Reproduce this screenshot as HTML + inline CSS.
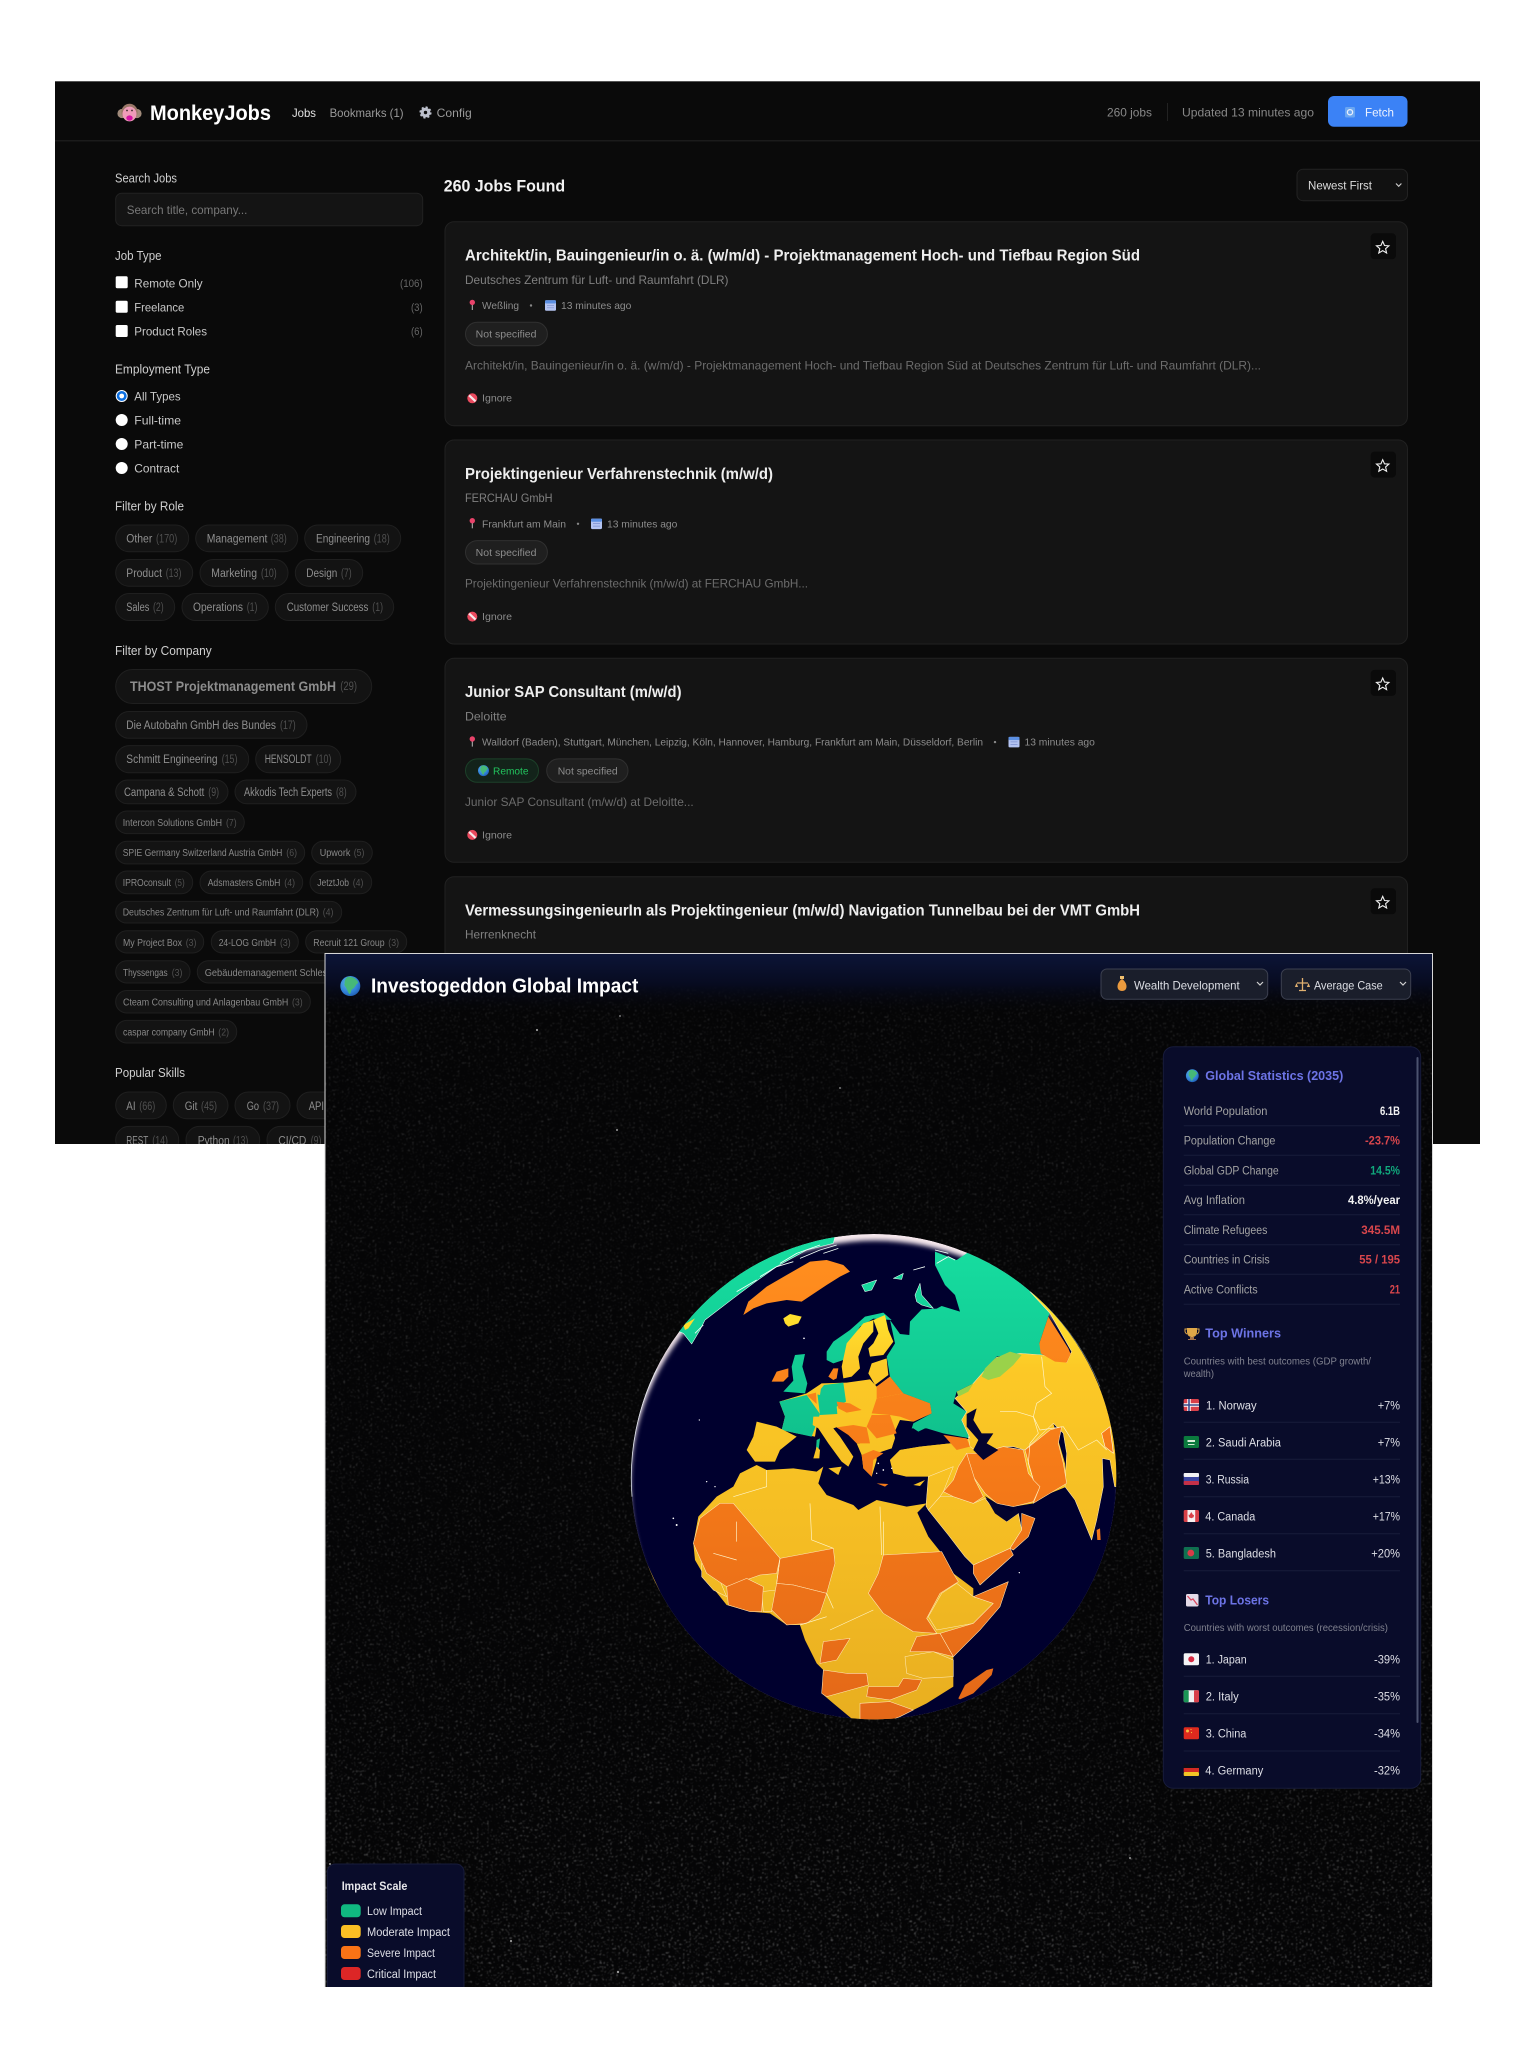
<!DOCTYPE html>
<html lang="en"><head><meta charset="utf-8"><title>MonkeyJobs</title>
<style>
html,body{margin:0;padding:0;background:#fff;width:1536px;height:2048px;overflow:hidden}
svg{display:block;filter:blur(.35px)}
text{font-family:"Liberation Sans",sans-serif}
.l{font-size:12.5px;fill:#cfcfcf}
.s{font-size:12px;fill:#c8c8c8}
.n{font-size:11px;fill:#666}
.p{font-size:11.5px;fill:#8f8f8f}
.q{font-size:10px;fill:#888}
.c{fill:#505050}
.t{font-size:15.5px;font-weight:bold;fill:#eee}
.o{font-size:12px;fill:#808080}
.m{font-size:10.5px;fill:#8c8c8c}
.d{font-size:12px;fill:#6c6c6c}
.g{font-size:11.5px;fill:#a3a3a3}
.v{font-size:11.5px;font-weight:bold;text-anchor:start}
.h{font-size:13px;font-weight:bold;fill:#6d74e6}
.k{font-size:11.5px;fill:#dedfe6}
.u{font-size:10px;fill:#80828f}
</style></head><body>
<svg xmlns="http://www.w3.org/2000/svg" width="1536" height="2048" viewBox="0 0 1536 2048">
<defs>
<clipPath id="win"><rect x="55" y="81" width="1425" height="1063"/></clipPath>
<clipPath id="gw"><rect x="325" y="953" width="1108" height="1034"/></clipPath>
<clipPath id="sph"><circle cx="761" cy="770" r="728"/></clipPath>
<linearGradient id="hg" x1="0" y1="0" x2="0" y2="1"><stop offset="0" stop-color="#0c1538"/><stop offset=".5" stop-color="#070b20"/><stop offset="1" stop-color="#050507" stop-opacity="0"/></linearGradient>
<linearGradient id="Y" gradientUnits="userSpaceOnUse" x1="0" y1="300" x2="0" y2="1500"><stop offset="0" stop-color="#ffdf2d"/><stop offset=".12" stop-color="#fcc926"/><stop offset=".6" stop-color="#f3bb23"/><stop offset="1" stop-color="#e8ae20"/></linearGradient>
<linearGradient id="O" gradientUnits="userSpaceOnUse" x1="0" y1="150" x2="0" y2="1500"><stop offset="0" stop-color="#ff8d1e"/><stop offset=".45" stop-color="#f57a18"/><stop offset="1" stop-color="#e36818"/></linearGradient>
<linearGradient id="G" gradientUnits="userSpaceOnUse" x1="0" y1="100" x2="0" y2="680"><stop offset="0" stop-color="#16dc9f"/><stop offset="1" stop-color="#10c08c"/></linearGradient>
<radialGradient id="gl" cx=".4" cy=".35" r=".75"><stop offset="0" stop-color="#5fb6e8"/><stop offset=".65" stop-color="#2f7fd6"/><stop offset="1" stop-color="#1c55a8"/></radialGradient>
<filter id="stars" x="0" y="0" width="100%" height="100%" color-interpolation-filters="sRGB"><feTurbulence type="fractalNoise" baseFrequency=".48" numOctaves="2" seed="11"/><feColorMatrix values="0 0 0 0 1 0 0 0 0 1 0 0 0 0 1 3.2 3.2 0 0 -3.6"/><feGaussianBlur stdDeviation=".55"/></filter>
<linearGradient id="fade" x1="0" y1="0" x2="0" y2="1"><stop offset="0" stop-color="#fff" stop-opacity="0"/><stop offset=".6" stop-color="#fff" stop-opacity=".25"/><stop offset="1" stop-color="#fff"/></linearGradient>
<mask id="bm"><rect x="325" y="953" width="1108" height="1034" fill="url(#fade)"/></mask>
<filter id="bl"><feGaussianBlur stdDeviation="7"/></filter>
<g id="star"><path d="M0,-6.2L1.8,-2.1L6.2,-1.8L2.9,1.1L3.9,5.4L0,3.1L-3.9,5.4L-2.9,1.1L-6.2,-1.8L-1.8,-2.1Z" fill="none" stroke="#f2f2f2" stroke-width="1.1"/></g>
<g id="pin"><path d="M0,-1V5" stroke="#b9b9b9" stroke-width="1"/><circle cy="-2.6" r="2.7" fill="#e8436a"/></g>
<g id="cal"><rect x="-5.5" y="-5" width="11" height="10.5" rx="1.2" fill="#b4c4f2"/><rect x="-5.5" y="-5" width="11" height="3.2" rx="1" fill="#5b8fe2"/><path d="M-3.5,0H3.5M-3.5,2.5H3.5" stroke="#7c8fd0" stroke-width=".7"/></g>
<g id="ign"><circle r="5" fill="#ea4a5e"/><path d="M-3.2,-3L3.2,3" stroke="#f5e8ea" stroke-width="2.2"/></g>
<g id="earth"><circle r="10" fill="url(#gl)"/><path d="M-3,-9C1,-10 7,-7 8,-3C5,-2 5,2 2,3C0,5 1,8-1,8C-3,5-4,1-6,-1C-5,-3-7,-5-3,-9Z" fill="#46b978"/></g>
</defs>

<rect width="1536" height="2048" fill="#fff"/>
<g clip-path="url(#win)">
<rect x="55" y="81" width="1425" height="1063" fill="#0a0a0a"/>
<rect x="55" y="81" width="1425" height="1" fill="#555"/>
<rect x="55" y="140" width="1425" height="1.5" fill="#1b1b1b"/>

<!-- logo -->
<ellipse cx="122" cy="113.5" rx="4.6" ry="4.6" fill="#a08a7a"/><ellipse cx="137" cy="113.5" rx="4.6" ry="4.6" fill="#a08a7a"/>
<circle cx="129.5" cy="112" r="8.2" fill="#9a7868"/><ellipse cx="129.5" cy="114" rx="7" ry="7.4" fill="#ee9cba"/>
<ellipse cx="129.5" cy="118" rx="3.2" ry="2.6" fill="#d414a4"/><circle cx="127" cy="110.5" r=".9" fill="#3a2a2a"/><circle cx="132" cy="110.5" r=".9" fill="#3a2a2a"/>
<text x="150" y="120" font-size="21" font-weight="bold" fill="#fff" textLength="121" lengthAdjust="spacingAndGlyphs">MonkeyJobs</text>
<text x="292" y="117" font-size="12" fill="#e2e2e2" textLength="24" lengthAdjust="spacingAndGlyphs">Jobs</text>
<text x="329.6" y="117" font-size="12" fill="#9a9a9a" textLength="74" lengthAdjust="spacingAndGlyphs">Bookmarks (1)</text>
<g transform="translate(425.5,112.5)"><circle r="3.3" fill="none" stroke="#bcc0cc" stroke-width="3.2"/><circle r="5.2" fill="none" stroke="#bcc0cc" stroke-width="1.8" stroke-dasharray="2.1 1.98"/></g>
<text x="436.7" y="117" font-size="12" fill="#9a9a9a" textLength="35" lengthAdjust="spacingAndGlyphs">Config</text>
<text x="1107" y="116.7" font-size="12" fill="#888" textLength="45" lengthAdjust="spacingAndGlyphs">260 jobs</text>
<rect x="1167" y="103" width="1" height="18" fill="#222"/>
<text x="1182" y="116.7" font-size="12" fill="#888" textLength="132" lengthAdjust="spacingAndGlyphs">Updated 13 minutes ago</text>
<rect x="1328" y="96" width="79.5" height="30.7" rx="6" fill="#3b82f6"/>
<rect x="1345" y="107" width="10" height="10.5" rx="1.5" fill="#6aa6f2"/><circle cx="1350" cy="112.2" r="2.6" fill="none" stroke="#e8eefc" stroke-width="1.3"/>
<text x="1365" y="116.7" font-size="12" fill="#eef3ff" textLength="29" lengthAdjust="spacingAndGlyphs">Fetch</text>

<!-- sidebar -->
<text class="l" x="115" y="182.7" textLength="62" lengthAdjust="spacingAndGlyphs">Search Jobs</text>
<rect x="115.7" y="193.3" width="307" height="32.4" rx="6" fill="#141414" stroke="#222"/>
<text x="126.7" y="214" font-size="12" fill="#787878" textLength="120.7" lengthAdjust="spacingAndGlyphs">Search title, company...</text>

<text class="l" x="115" y="260" textLength="46.5" lengthAdjust="spacingAndGlyphs">Job Type</text>
<rect x="115.7" y="276.3" width="12" height="12" rx="1.5" fill="#fff"/>
<text class="s" x="134.3" y="287.3" textLength="68.3" lengthAdjust="spacingAndGlyphs">Remote Only</text>
<text class="n" x="400" y="287" textLength="22.7" lengthAdjust="spacingAndGlyphs">(106)</text>
<rect x="115.7" y="300.7" width="12" height="12" rx="1.5" fill="#fff"/>
<text class="s" x="134.3" y="311.7" textLength="50" lengthAdjust="spacingAndGlyphs">Freelance</text>
<text class="n" x="411" y="311" textLength="11.7" lengthAdjust="spacingAndGlyphs">(3)</text>
<rect x="115.7" y="325" width="12" height="12" rx="1.5" fill="#fff"/>
<text class="s" x="134.3" y="335.7" textLength="72.7" lengthAdjust="spacingAndGlyphs">Product Roles</text>
<text class="n" x="411" y="335" textLength="11.7" lengthAdjust="spacingAndGlyphs">(6)</text>

<text class="l" x="115" y="373.3" textLength="95" lengthAdjust="spacingAndGlyphs">Employment Type</text>
<circle cx="121.7" cy="396" r="6" fill="#fff"/><circle cx="121.7" cy="396" r="5" fill="#0b6ee0"/><circle cx="121.7" cy="396" r="2.4" fill="#fff"/>
<text class="s" x="134.3" y="400.7" textLength="46.3" lengthAdjust="spacingAndGlyphs">All Types</text>
<circle cx="121.7" cy="420" r="6" fill="#fff"/>
<text class="s" x="134.3" y="424.7" textLength="46.7" lengthAdjust="spacingAndGlyphs">Full-time</text>
<circle cx="121.7" cy="444" r="6" fill="#fff"/>
<text class="s" x="134.3" y="448.7" textLength="49" lengthAdjust="spacingAndGlyphs">Part-time</text>
<circle cx="121.7" cy="468" r="6" fill="#fff"/>
<text class="s" x="134.3" y="472.7" textLength="45" lengthAdjust="spacingAndGlyphs">Contract</text>

<text class="l" x="115" y="510.7" textLength="69" lengthAdjust="spacingAndGlyphs">Filter by Role</text>
<g fill="#131313" stroke="#1f1f1f">
<rect x="115.7" y="525" width="73" height="26.7" rx="13.3"/><rect x="195.7" y="525" width="102" height="26.7" rx="13.3"/><rect x="304.7" y="525" width="96" height="26.7" rx="13.3"/>
<rect x="115.7" y="559.5" width="77" height="26.7" rx="13.3"/><rect x="200" y="559.5" width="88" height="26.7" rx="13.3"/><rect x="295.3" y="559.5" width="67.4" height="26.7" rx="13.3"/>
<rect x="115.7" y="593.5" width="59" height="27" rx="13.5"/><rect x="182" y="593.5" width="86.3" height="27" rx="13.5"/><rect x="275.3" y="593.5" width="118.4" height="27" rx="13.5"/>
<rect x="115.7" y="669.5" width="256" height="34" rx="17"/>
<rect x="115.7" y="711.5" width="191.3" height="26.8" rx="13.4"/>
<rect x="115.7" y="745.6" width="133" height="27.2" rx="13.6"/><rect x="255.7" y="745.6" width="85" height="27.2" rx="13.6"/>
<rect x="115.7" y="780" width="112.3" height="23.8" rx="11.9"/><rect x="235" y="780" width="121" height="23.8" rx="11.9"/>
<rect x="115.7" y="811" width="128.6" height="22.6" rx="11.3"/>
<rect x="115.7" y="841.3" width="189" height="22.6" rx="11.3"/><rect x="311.7" y="841.3" width="60.6" height="22.6" rx="11.3"/>
<rect x="115.7" y="871" width="77" height="22.7" rx="11.3"/><rect x="200" y="871" width="102.7" height="22.7" rx="11.3"/><rect x="310" y="871" width="61.7" height="22.7" rx="11.3"/>
<rect x="115.7" y="901.4" width="226" height="21.6" rx="10.8"/>
<rect x="115.7" y="930.8" width="88" height="22.2" rx="11"/><rect x="211.3" y="930.8" width="87" height="22.2" rx="11"/><rect x="305.7" y="930.8" width="101" height="22.2" rx="11"/>
<rect x="115.7" y="960.7" width="74.3" height="22.3" rx="11"/><rect x="197.3" y="960.7" width="205" height="22.3" rx="11"/>
<rect x="115.7" y="990.5" width="194.6" height="22.5" rx="11"/>
<rect x="115.7" y="1020.4" width="121" height="22.6" rx="11"/>
<rect x="115.7" y="1092" width="50.6" height="26.7" rx="13.3"/><rect x="173.3" y="1092" width="54.7" height="26.7" rx="13.3"/><rect x="235" y="1092" width="55" height="26.7" rx="13.3"/><rect x="297" y="1092" width="70" height="26.7" rx="13.3"/>
<rect x="115.7" y="1126.4" width="63" height="27" rx="13.3"/><rect x="186" y="1126.4" width="73.7" height="27" rx="13.3"/><rect x="267" y="1126.4" width="70" height="27" rx="13.3"/>
</g>
<text class="p" x="126.3" y="542.5" textLength="26" lengthAdjust="spacingAndGlyphs">Other</text><text class="p c" x="156" y="542.5" textLength="21.3" lengthAdjust="spacingAndGlyphs">(170)</text>
<text class="p" x="206.7" y="542.5" textLength="60.7" lengthAdjust="spacingAndGlyphs">Management</text><text class="p c" x="270.7" y="542.5" textLength="16" lengthAdjust="spacingAndGlyphs">(38)</text>
<text class="p" x="316" y="542.5" textLength="54" lengthAdjust="spacingAndGlyphs">Engineering</text><text class="p c" x="373.7" y="542.5" textLength="16" lengthAdjust="spacingAndGlyphs">(18)</text>
<text class="p" x="126.3" y="577" textLength="35.7" lengthAdjust="spacingAndGlyphs">Product</text><text class="p c" x="165.7" y="577" textLength="15.7" lengthAdjust="spacingAndGlyphs">(13)</text>
<text class="p" x="211.3" y="577" textLength="45.7" lengthAdjust="spacingAndGlyphs">Marketing</text><text class="p c" x="261" y="577" textLength="15.7" lengthAdjust="spacingAndGlyphs">(10)</text>
<text class="p" x="306.3" y="577" textLength="31" lengthAdjust="spacingAndGlyphs">Design</text><text class="p c" x="341" y="577" textLength="10.7" lengthAdjust="spacingAndGlyphs">(7)</text>
<text class="p" x="126.3" y="611" textLength="23" lengthAdjust="spacingAndGlyphs">Sales</text><text class="p c" x="153" y="611" textLength="10.7" lengthAdjust="spacingAndGlyphs">(2)</text>
<text class="p" x="193" y="611" textLength="50" lengthAdjust="spacingAndGlyphs">Operations</text><text class="p c" x="246.7" y="611" textLength="10.7" lengthAdjust="spacingAndGlyphs">(1)</text>
<text class="p" x="286.7" y="611" textLength="81.7" lengthAdjust="spacingAndGlyphs">Customer Success</text><text class="p c" x="372.3" y="611" textLength="10.7" lengthAdjust="spacingAndGlyphs">(1)</text>

<text class="l" x="115" y="655" textLength="96.7" lengthAdjust="spacingAndGlyphs">Filter by Company</text>
<text x="130" y="691" font-size="14" font-weight="bold" fill="#8d8d8d" textLength="206" lengthAdjust="spacingAndGlyphs">THOST Projektmanagement GmbH</text><text class="p c" x="340.3" y="690" textLength="16.7" lengthAdjust="spacingAndGlyphs">(29)</text>
<text class="p" x="126.3" y="729" textLength="149.7" lengthAdjust="spacingAndGlyphs">Die Autobahn GmbH des Bundes</text><text class="p c" x="280" y="729" textLength="15.7" lengthAdjust="spacingAndGlyphs">(17)</text>
<text class="p" x="126.3" y="763" textLength="91.3" lengthAdjust="spacingAndGlyphs">Schmitt Engineering</text><text class="p c" x="221.7" y="763" textLength="15.7" lengthAdjust="spacingAndGlyphs">(15)</text>
<text class="p" x="264.7" y="763" textLength="47" lengthAdjust="spacingAndGlyphs">HENSOLDT</text><text class="p c" x="315.7" y="763" textLength="15.7" lengthAdjust="spacingAndGlyphs">(10)</text>
<text class="p" x="124" y="796" textLength="80.3" lengthAdjust="spacingAndGlyphs">Campana &amp; Schott</text><text class="p c" x="208.3" y="796" textLength="10.7" lengthAdjust="spacingAndGlyphs">(9)</text>
<text class="p" x="244" y="796" textLength="88" lengthAdjust="spacingAndGlyphs">Akkodis Tech Experts</text><text class="p c" x="336" y="796" textLength="10.7" lengthAdjust="spacingAndGlyphs">(8)</text>
<text class="q" x="122.7" y="826" textLength="99.3" lengthAdjust="spacingAndGlyphs">Intercon Solutions GmbH</text><text class="q c" x="226" y="826" textLength="10.7" lengthAdjust="spacingAndGlyphs">(7)</text>
<text class="q" x="122.7" y="856" textLength="159.7" lengthAdjust="spacingAndGlyphs">SPIE Germany Switzerland Austria GmbH</text><text class="q c" x="286.3" y="856" textLength="10.7" lengthAdjust="spacingAndGlyphs">(6)</text>
<text class="q" x="319.7" y="856" textLength="30.7" lengthAdjust="spacingAndGlyphs">Upwork</text><text class="q c" x="353.7" y="856" textLength="10.7" lengthAdjust="spacingAndGlyphs">(5)</text>
<text class="q" x="122.7" y="886" textLength="48.3" lengthAdjust="spacingAndGlyphs">IPROconsult</text><text class="q c" x="174.7" y="886" textLength="10" lengthAdjust="spacingAndGlyphs">(5)</text>
<text class="q" x="207.7" y="886" textLength="72.7" lengthAdjust="spacingAndGlyphs">Adsmasters GmbH</text><text class="q c" x="284.3" y="886" textLength="10.7" lengthAdjust="spacingAndGlyphs">(4)</text>
<text class="q" x="317.3" y="886" textLength="31.7" lengthAdjust="spacingAndGlyphs">JetztJob</text><text class="q c" x="352.7" y="886" textLength="10.7" lengthAdjust="spacingAndGlyphs">(4)</text>
<text class="q" x="122.7" y="915.5" textLength="196.3" lengthAdjust="spacingAndGlyphs">Deutsches Zentrum für Luft- und Raumfahrt (DLR)</text><text class="q c" x="322.7" y="915.5" textLength="10.7" lengthAdjust="spacingAndGlyphs">(4)</text>
<text class="q" x="123" y="946" textLength="59" lengthAdjust="spacingAndGlyphs">My Project Box</text><text class="q c" x="185.7" y="946" textLength="10.7" lengthAdjust="spacingAndGlyphs">(3)</text>
<text class="q" x="218.7" y="946" textLength="57.3" lengthAdjust="spacingAndGlyphs">24-LOG GmbH</text><text class="q c" x="280" y="946" textLength="10.7" lengthAdjust="spacingAndGlyphs">(3)</text>
<text class="q" x="313.3" y="946" textLength="71.3" lengthAdjust="spacingAndGlyphs">Recruit 121 Group</text><text class="q c" x="388.3" y="946" textLength="10.7" lengthAdjust="spacingAndGlyphs">(3)</text>
<text class="q" x="123" y="976" textLength="44.7" lengthAdjust="spacingAndGlyphs">Thyssengas</text><text class="q c" x="171.7" y="976" textLength="10.7" lengthAdjust="spacingAndGlyphs">(3)</text>
<text class="q" x="204.7" y="976" textLength="187" lengthAdjust="spacingAndGlyphs">Gebäudemanagement Schleswig-Holstein (3)</text>
<text class="q" x="123" y="1005.5" textLength="165.3" lengthAdjust="spacingAndGlyphs">Cteam Consulting und Anlagenbau GmbH</text><text class="q c" x="292" y="1005.5" textLength="10.7" lengthAdjust="spacingAndGlyphs">(3)</text>
<text class="q" x="123" y="1035.5" textLength="91.7" lengthAdjust="spacingAndGlyphs">caspar company GmbH</text><text class="q c" x="218.3" y="1035.5" textLength="10.7" lengthAdjust="spacingAndGlyphs">(2)</text>

<text class="l" x="115" y="1077" textLength="70" lengthAdjust="spacingAndGlyphs">Popular Skills</text>
<text class="p" x="126.3" y="1110" textLength="9.3" lengthAdjust="spacingAndGlyphs">AI</text><text class="p c" x="139.3" y="1110" textLength="16" lengthAdjust="spacingAndGlyphs">(66)</text>
<text class="p" x="184.7" y="1110" textLength="12.7" lengthAdjust="spacingAndGlyphs">Git</text><text class="p c" x="201" y="1110" textLength="16" lengthAdjust="spacingAndGlyphs">(45)</text>
<text class="p" x="246.7" y="1110" textLength="12.3" lengthAdjust="spacingAndGlyphs">Go</text><text class="p c" x="263" y="1110" textLength="16" lengthAdjust="spacingAndGlyphs">(37)</text>
<text class="p" x="308.7" y="1110" textLength="15.3" lengthAdjust="spacingAndGlyphs">API</text>
<text class="p" x="126.3" y="1144.5" textLength="22" lengthAdjust="spacingAndGlyphs">REST</text><text class="p c" x="152.3" y="1144.5" textLength="15.7" lengthAdjust="spacingAndGlyphs">(14)</text>
<text class="p" x="197.7" y="1144.5" textLength="32" lengthAdjust="spacingAndGlyphs">Python</text><text class="p c" x="233" y="1144.5" textLength="15.3" lengthAdjust="spacingAndGlyphs">(13)</text>
<text class="p" x="278.3" y="1144.5" textLength="28" lengthAdjust="spacingAndGlyphs">CI/CD</text><text class="p c" x="310.7" y="1144.5" textLength="10.7" lengthAdjust="spacingAndGlyphs">(9)</text>

<!-- main -->
<text x="443.7" y="191.7" font-size="17" font-weight="bold" fill="#f2f2f2" textLength="121.5" lengthAdjust="spacingAndGlyphs">260 Jobs Found</text>
<rect x="1297" y="169.3" width="110.5" height="31.4" rx="6" fill="#111" stroke="#222"/>
<text x="1308" y="189.3" font-size="12" fill="#dcdcdc" textLength="64" lengthAdjust="spacingAndGlyphs">Newest First</text>
<path d="M1396,183.5l2.7,2.8 2.7,-2.8" fill="none" stroke="#c8c8c8" stroke-width="1.2"/>

<!-- Card 1 -->
<rect x="445" y="221.7" width="962.5" height="204" rx="9" fill="#141414" stroke="#212121"/>
<rect x="1370.6" y="233.3" width="25.4" height="26" rx="4" fill="#0a0a0a"/><use href="#star" x="1382.7" y="247.6"/>
<text class="t" x="465" y="260.7" textLength="675" lengthAdjust="spacingAndGlyphs">Architekt/in, Bauingenieur/in o. ä. (w/m/d) - Projektmanagement Hoch- und Tiefbau Region Süd</text>
<text class="o" x="465" y="284.2" textLength="263.5" lengthAdjust="spacingAndGlyphs">Deutsches Zentrum für Luft- und Raumfahrt (DLR)</text>
<use href="#pin" x="472.3" y="305"/>
<text class="m" x="482" y="309" textLength="37" lengthAdjust="spacingAndGlyphs">Weßling</text>
<circle cx="531" cy="305.5" r="1.2" fill="#888"/><use href="#cal" x="550.5" y="305.3"/>
<text class="m" x="561" y="309" textLength="70.4" lengthAdjust="spacingAndGlyphs">13 minutes ago</text>
<rect x="465.5" y="322.3" width="81.9" height="23.4" rx="11.7" fill="#1f1f1f" stroke="#303030"/>
<text class="m" x="475.7" y="337.7" textLength="60.8" lengthAdjust="spacingAndGlyphs">Not specified</text>
<text class="d" x="465" y="369.3" textLength="796" lengthAdjust="spacingAndGlyphs">Architekt/in, Bauingenieur/in o. ä. (w/m/d) - Projektmanagement Hoch- und Tiefbau Region Süd at Deutsches Zentrum für Luft- und Raumfahrt (DLR)...</text>
<use href="#ign" x="472.3" y="398.3"/><text class="m" x="482" y="401.7" fill="#777" textLength="30" lengthAdjust="spacingAndGlyphs">Ignore</text>

<!-- Card 2 -->
<rect x="445" y="440" width="962.5" height="204" rx="9" fill="#141414" stroke="#212121"/>
<rect x="1370.6" y="451.6" width="25.4" height="26" rx="4" fill="#0a0a0a"/><use href="#star" x="1382.7" y="465.9"/>
<text class="t" x="465" y="479" textLength="308" lengthAdjust="spacingAndGlyphs">Projektingenieur Verfahrenstechnik (m/w/d)</text>
<text class="o" x="465" y="502" textLength="87.5" lengthAdjust="spacingAndGlyphs">FERCHAU GmbH</text>
<use href="#pin" x="472.3" y="523.3"/>
<text class="m" x="482" y="527.3" textLength="84" lengthAdjust="spacingAndGlyphs">Frankfurt am Main</text>
<circle cx="578" cy="523.8" r="1.2" fill="#888"/><use href="#cal" x="596.5" y="523.6"/>
<text class="m" x="607" y="527.3" textLength="70.4" lengthAdjust="spacingAndGlyphs">13 minutes ago</text>
<rect x="465.5" y="540.6" width="81.9" height="23.4" rx="11.7" fill="#1f1f1f" stroke="#303030"/>
<text class="m" x="475.7" y="556" textLength="60.8" lengthAdjust="spacingAndGlyphs">Not specified</text>
<text class="d" x="465" y="587.6" textLength="343" lengthAdjust="spacingAndGlyphs">Projektingenieur Verfahrenstechnik (m/w/d) at FERCHAU GmbH...</text>
<use href="#ign" x="472.3" y="616.6"/><text class="m" x="482" y="620" textLength="30" lengthAdjust="spacingAndGlyphs">Ignore</text>

<!-- Card 3 -->
<rect x="445" y="658.3" width="962.5" height="204" rx="9" fill="#141414" stroke="#212121"/>
<rect x="1370.6" y="669.9" width="25.4" height="26" rx="4" fill="#0a0a0a"/><use href="#star" x="1382.7" y="684.2"/>
<text class="t" x="465" y="697" textLength="216.5" lengthAdjust="spacingAndGlyphs">Junior SAP Consultant (m/w/d)</text>
<text class="o" x="465" y="720.3" textLength="41.6" lengthAdjust="spacingAndGlyphs">Deloitte</text>
<use href="#pin" x="472.3" y="741.6"/>
<text class="m" x="482" y="745.6" textLength="501" lengthAdjust="spacingAndGlyphs">Walldorf (Baden), Stuttgart, München, Leipzig, Köln, Hannover, Hamburg, Frankfurt am Main, Düsseldorf, Berlin</text>
<circle cx="995" cy="742.1" r="1.2" fill="#888"/><use href="#cal" x="1014" y="741.9"/>
<text class="m" x="1024.5" y="745.6" textLength="70.4" lengthAdjust="spacingAndGlyphs">13 minutes ago</text>
<rect x="465.5" y="758.9" width="73" height="23.4" rx="11.7" fill="#13231a" stroke="#1c4029"/>
<g transform="translate(483.5,770.6) scale(.55)"><use href="#earth"/></g>
<text x="493" y="774.3" font-size="10.5" fill="#22c55e" textLength="35.5" lengthAdjust="spacingAndGlyphs">Remote</text>
<rect x="546.7" y="758.9" width="81.3" height="23.4" rx="11.7" fill="#1f1f1f" stroke="#303030"/>
<text class="m" x="557.7" y="774.3" textLength="60" lengthAdjust="spacingAndGlyphs">Not specified</text>
<text class="d" x="465" y="805.9" textLength="228.7" lengthAdjust="spacingAndGlyphs">Junior SAP Consultant (m/w/d) at Deloitte...</text>
<use href="#ign" x="472.3" y="834.9"/><text class="m" x="482" y="838.3" textLength="30" lengthAdjust="spacingAndGlyphs">Ignore</text>

<!-- Card 4 -->
<rect x="445" y="876.7" width="962.5" height="204" rx="9" fill="#141414" stroke="#212121"/>
<rect x="1370.6" y="888.3" width="25.4" height="26" rx="4" fill="#0a0a0a"/><use href="#star" x="1382.7" y="902.6"/>
<text class="t" x="465" y="915.7" textLength="675" lengthAdjust="spacingAndGlyphs">VermessungsingenieurIn als Projektingenieur (m/w/d) Navigation Tunnelbau bei der VMT GmbH</text>
<text class="o" x="465" y="938.7" textLength="71" lengthAdjust="spacingAndGlyphs">Herrenknecht</text>
</g>

<!-- Globe window -->
<g clip-path="url(#gw)">
<rect x="325" y="953" width="1108" height="1034" fill="#050506"/>
<rect x="325" y="953" width="1108" height="1034" filter="url(#stars)" opacity=".14"/>
<g mask="url(#bm)"><rect x="325" y="953" width="1108" height="1034" filter="url(#stars)" opacity=".22"/></g>
<rect x="325" y="953" width="1108" height="62" fill="url(#hg)"/>
<g fill="#9a9a9a"><circle cx="537" cy="1030" r="1.1"/><circle cx="620" cy="1016" r=".9"/><circle cx="617" cy="1130" r="1"/><circle cx="840" cy="1088" r=".9"/><circle cx="1130" cy="1858" r="1"/><circle cx="618" cy="1972" r="1.2"/><circle cx="511" cy="1941" r="1.1"/><circle cx="330" cy="1864" r="1"/></g>

<!-- Globe -->
<g transform="translate(620,1220) scale(.33333)">
<g clip-path="url(#sph)">
<circle cx="761" cy="770" r="728" fill="#f6e8ee"/>
<circle cx="765" cy="796" r="734" fill="#04042e" filter="url(#bl)"/>
</g>
<path d="M1230,215A728,728 0 0 1 1440,500" fill="none" stroke="#9fb4c8" stroke-width="2" opacity=".6"/>
<path d="M36,830A728,728 0 0 1 112,445" fill="none" stroke="#e8eef4" stroke-width="2.5" opacity=".85"/>
<g clip-path="url(#sph)" stroke="#ffe9b8" stroke-width="1.6" stroke-linejoin="round">
<!-- land bases -->
<g fill="url(#Y)" stroke="none">
<path d="M478,545L560,520L605,490L680,488L750,478L770,500L810,470L850,520L930,550L935,580L880,605L840,600L822,640L825,655L815,685L770,700L770,720L755,770L730,745L725,705L720,670L690,645L650,622L640,605L590,620L585,650L530,640L485,630L495,590Z"/>
<path d="M810,720L840,690L900,680L990,670L1050,655L1090,725L1135,695L1215,690L1300,610L1335,730L1340,800L1290,820L1240,850L1180,860L1130,850L1095,835L1060,850L1000,830L960,830L925,870L918,858L925,770L860,770L820,760Z"/>
<path d="M235,890L290,830L340,800L360,760L410,735L440,750L520,745L590,755L610,740L595,790L620,825L700,855L715,870L770,840L860,860L920,850L892,878L925,950L965,1000L1000,1060L1060,1105L1060,1130L1165,1085L1140,1160L1080,1230L1000,1310L1000,1400L920,1450L880,1470L840,1490L800,1505L700,1500L640,1450L605,1420L610,1350L590,1330L555,1260L540,1215L500,1215L450,1180L390,1175L320,1155L260,1080L225,1020L220,970Z"/>
</g>
<!-- green -->
<g fill="url(#G)">
<path d="M100,300L190,340L215,372L240,330L255,300L340,235L400,190L470,140L560,90L640,70L650,30L300,30Z" stroke="#e8fff5"/>
<path d="M945,95L1010,120L1100,60L1300,250L1285,290L1258,370L1268,405L1200,400L1130,410L1095,450L1060,490L1010,515L1000,550L1040,575L1025,600L1050,655L970,640L920,625L875,625L880,610L935,580L930,550L850,520L810,470L800,410L825,370L810,300L840,342L868,345L870,305L905,268L950,266L965,258L1020,275L1005,225L975,195L945,135Z" stroke="none"/>
<path d="M620,395L640,365L690,330L735,290L790,278L815,300L760,296L720,320L690,370L670,420L640,430L620,420Z" stroke="none"/>
<path d="M490,515L520,482L515,440L525,405L555,402L547,440L562,490L555,520Z" stroke="none"/>
<path d="M478,545L540,530L560,525L600,582L575,650L530,640L485,630L495,590Z" stroke="none"/>
<path d="M592,520L612,495L670,488L678,545L650,560L652,582L600,585Z" stroke="none"/>
<path d="M725,195L770,180L755,210L735,215Z" stroke="#e8fff5"/>
<path d="M590,660L600,655L596,688L588,688Z" stroke="none"/>
<path d="M885,225L900,190L905,225L940,265L905,255L890,245Z" stroke="#e8fff5"/>
<path d="M820,175L850,160L845,178Z" stroke="#e8fff5"/>
<path d="M880,625L905,610L915,625L895,635Z" stroke="none"/>
</g>
<!-- yellow -->
<g fill="url(#Y)">
<path d="M1005,535L1060,490L1095,450L1130,412L1200,400L1268,405L1340,428L1355,395L1290,280L1230,215L1500,400L1500,800L1484,800L1470,720L1447,715L1450,800L1430,900L1415,960L1390,900L1365,840L1335,800L1340,700L1330,640L1300,610L1215,690L1180,680L1150,680L1080,700L1050,680L1045,650L1050,655L1025,600L1040,575Z"/>
<path d="M490,295L510,282L545,290L535,310L505,320L495,310Z" stroke="none"/>
<path d="M665,440L680,370L730,310L760,300L760,335L730,370L715,410L720,445L695,470L670,475Z" stroke="none"/>
<path d="M760,300L795,285L805,330L820,365L790,405L750,410L745,385L760,370L775,340Z" stroke="none"/>
<path d="M745,460L755,430L800,415L805,465L765,495Z" stroke="none"/>
<path d="M678,495L750,478L765,495L770,550L750,570L690,550L678,530Z" stroke="none"/>
<path d="M640,595L680,575L720,580L700,605L645,610Z" stroke="none"/>
<path d="M685,615L700,590L755,580L745,610L705,620Z" stroke="none"/>
<path d="M755,660L825,650L815,685L770,690Z" stroke="none"/>
<path d="M710,670L755,670L755,695L725,705Z" stroke="none"/>
<path d="M580,590L640,590L655,620L640,625L660,650L700,710L685,740L665,725L625,670L595,625L578,615Z" stroke="none"/>
<path d="M625,745L665,740L655,765Z" stroke="none"/>
<path d="M580,715L590,680L600,690L598,715Z" stroke="none"/>
<path d="M575,520L605,490L600,525Z" stroke="none"/>
<path d="M380,690L400,650L410,605L470,620L530,650L480,690L465,725L405,725Z" stroke="none"/>
<path d="M810,720L840,690L900,680L990,670L1030,710L1000,735L910,745L860,770L820,760Z" stroke="none"/>
<path d="M880,795L915,780L900,798Z" stroke="none"/>
<path d="M925,870L960,830L1000,830L1060,850L1095,835L1130,880L1160,905L1195,880L1205,930L1170,985L1060,1035L1035,1010L985,945Z"/>
<path d="M925,770L1000,740L970,815L960,830L925,870L918,858Z"/>
<path d="M245,1030L290,1060L320,1130L280,1110L245,1070Z"/>
<path d="M425,1115L470,1110L455,1175L430,1175Z"/>
<path d="M965,1120L1010,1090L1060,1130L1120,1150L1060,1210L950,1230L925,1190Z"/>
<path d="M855,1310L940,1295L1000,1320L1000,1370L910,1375L860,1360Z"/>
<path d="M70,1010L85,1040L120,1115L100,1090Z" stroke="none"/>
<path d="M190,315L225,295L205,325L195,330Z" stroke="none"/>
<path d="M1095,445L1125,415L1170,395L1205,405L1180,435L1140,470L1105,480L1085,470Z" fill="#9ad24a" stroke="none"/>
<path d="M1010,515L1060,490L1045,515L1015,530Z" fill="#9ad24a" stroke="none"/>
</g>
<!-- orange -->
<g fill="url(#O)">
<path d="M370,285L385,245L440,200L500,165L570,125L620,120L670,135L690,155L660,170L620,195L590,215L545,245L500,240L440,250L400,265Z" stroke="none"/>
<path d="M1285,290L1345,385L1352,402L1340,428L1305,425L1262,400L1258,370Z" stroke="none"/>
<path d="M455,485L470,455L505,445L505,470L490,485Z" stroke="none"/>
<path d="M625,470L640,445L655,445L650,475L640,480Z" stroke="none"/>
<path d="M560,525L588,518L590,552Z" stroke="none"/>
<path d="M650,545L690,550L725,570L680,578L655,565Z" stroke="none"/>
<path d="M770,500L810,470L850,520L770,535Z" stroke="none"/>
<path d="M770,535L850,520L930,550L935,580L880,605L840,590L810,585L755,580Z" stroke="none"/>
<path d="M740,620L755,585L810,585L830,640L770,655Z" stroke="none"/>
<path d="M650,622L700,615L740,622L750,670L710,670L685,645Z" stroke="none"/>
<path d="M725,705L760,690L790,700L760,720L755,770L730,745Z" stroke="none"/>
<path d="M970,645L1040,655L1050,680L1010,690Z" stroke="none"/>
<path d="M1040,700L1080,700L1150,680L1210,690L1225,760L1260,800L1240,845L1180,860L1130,850L1095,820L1060,770Z"/>
<path d="M1015,740L1040,700L1065,780L1090,830L1060,850L1000,830L970,815L1000,780Z"/>
<path d="M1215,690L1290,630L1325,620L1315,670L1330,730L1340,790L1290,820L1240,850L1260,800L1240,780Z"/>
<path d="M1205,880L1245,895L1225,950L1180,990L1170,985L1205,930Z"/>
<path d="M1060,1035L1170,985L1180,1005L1080,1095L1060,1060Z"/>
<path d="M240,895L300,850L340,850L480,1015L470,1060L420,1065L350,1090L320,1100L260,1060L220,970Z"/>
<path d="M480,1015L640,985L645,1030L620,1120L520,1095L470,1090Z"/>
<path d="M470,1090L520,1095L620,1120L600,1180L560,1210L500,1215L455,1170Z"/>
<path d="M320,1100L380,1075L430,1100L425,1175L390,1175L325,1155Z"/>
<path d="M790,1005L965,995L1000,1060L1015,1085L960,1120L920,1195L950,1240L880,1235L790,1180L745,1120L775,1060Z"/>
<path d="M1060,1130L1165,1085L1140,1160L1080,1230L1000,1310L960,1240L1060,1210L1120,1150Z"/>
<path d="M870,1295L890,1250L960,1240L1000,1310L940,1295Z"/>
<path d="M610,1265L690,1255L650,1320L600,1330Z"/>
<path d="M610,1350L680,1360L740,1360L745,1395L620,1430L605,1420Z"/>
<path d="M745,1400L835,1400L850,1375L905,1380L890,1410L810,1440L740,1430Z"/>
<path d="M720,1450L810,1445L880,1470L840,1490L800,1505L720,1505Z"/>
<path d="M1015,1435L1035,1395L1100,1350L1120,1345L1115,1365L1060,1420L1020,1438Z" stroke="none"/>
<path d="M1430,930L1440,925L1442,960L1432,960Z" stroke="none"/>
<path d="M1445,640L1470,620L1480,700L1455,680Z" stroke="#fff"/>
<path d="M770,790L805,792L795,800Z" stroke="none"/>
</g>
<!-- inland seas -->
<g fill="#04042e" stroke="none">
<path d="M1040,582L1070,565L1060,600L1085,640L1120,640L1100,670L1135,690L1090,720L1060,690L1075,660L1040,620Z"/>
<path d="M1095,828L1130,850L1175,875L1190,860L1195,880L1160,905L1125,880Z"/>
</g>
<!-- white border lines and tattered arctic -->
<g fill="none" stroke="#fff4c8" stroke-width="2">
<path d="M1265,410L1275,500L1295,520L1250,550L1240,590L1255,640L1230,670L1225,730L1240,780"/>
<path d="M1140,575L1190,575L1240,590L1260,630L1330,620L1375,690L1430,660L1460,690"/>
<path d="M350,905V965M790,905V1005M570,850L575,960L640,985M440,750L440,800L340,830M780,860L785,1005"/>
<path d="M280,1000L350,1020M480,1015L470,1090M620,1120L640,1165M540,1215L620,1190M630,1230L760,1170"/>
</g>
<g fill="none" stroke="#f4fffa" stroke-width="2.5">
<path d="M480,130L530,100L600,75M540,115L600,90L650,75M420,170L470,140L520,125M350,215L410,180M610,100L655,85"/>
<path d="M950,130L985,110L1005,120M945,90L985,100M880,150L915,140M225,340L250,315"/>
</g>
</g>
<g fill="#fff"><circle cx="170" cy="915" r="3"/><circle cx="160" cy="895" r="2.5"/><circle cx="238" cy="600" r="2"/><circle cx="552" cy="355" r="2.5"/><circle cx="775" cy="730" r="2.5"/><circle cx="790" cy="750" r="2.5"/><circle cx="770" cy="760" r="2"/><circle cx="815" cy="745" r="2"/><circle cx="285" cy="800" r="2"/><circle cx="260" cy="785" r="2"/><circle cx="1198" cy="1058" r="2"/></g>
</g>

<!-- globe header -->
<use href="#earth" x="350.3" y="986"/>
<text x="371" y="992.7" font-size="20" font-weight="bold" fill="#fff" textLength="267.3" lengthAdjust="spacingAndGlyphs">Investogeddon Global Impact</text>
<rect x="1101" y="969" width="166.7" height="30.3" rx="6" fill="#1a1e2b" stroke="#3c4050"/>
<path d="M1122,979C1116,983 1116,991 1122,991C1128,991 1128,983 1122,979Z" fill="#ea9a3e"/><rect x="1120" y="976" width="4" height="3" fill="#f0c070"/>
<text x="1134" y="989.3" font-size="12" fill="#dcdee4" textLength="105.7" lengthAdjust="spacingAndGlyphs">Wealth Development</text>
<path d="M1257,982l3,3 3,-3" fill="none" stroke="#d0d0d0" stroke-width="1.2"/>
<rect x="1281.3" y="969" width="129.4" height="30.3" rx="6" fill="#1a1e2b" stroke="#3c4050"/>
<path d="M1297,983H1308M1302.5,978V990M1299,990.5H1306" stroke="#e0b070" stroke-width="1.3" fill="none"/><path d="M1296.5,983l-1.6,4h3.2zM1308.5,983l-1.6,4h3.2z" fill="#e0b070"/>
<text x="1314" y="989.3" font-size="12" fill="#dcdee4" textLength="68.7" lengthAdjust="spacingAndGlyphs">Average Case</text>
<path d="M1400,982l3,3 3,-3" fill="none" stroke="#d0d0d0" stroke-width="1.2"/>

<!-- stats panel -->
<rect x="1163.3" y="1046.7" width="257.4" height="741.6" rx="10" fill="#090c2a" stroke="#171b3a"/>
<rect x="1416.5" y="1057" width="2" height="666" rx="1" fill="#4b526e"/>
<use href="#earth" transform="translate(1192.3,1075.7) scale(.64)"/>
<text class="h" x="1205.3" y="1080" textLength="138" lengthAdjust="spacingAndGlyphs">Global Statistics (2035)</text>
<g stroke="#181c3a" stroke-width="1"><path d="M1183.7,1125.7H1400M1183.7,1155.3H1400M1183.7,1185.3H1400M1183.7,1214.7H1400M1183.7,1244.7H1400M1183.7,1274.3H1400M1183.7,1304.3H1400M1183.7,1422.3H1400M1183.7,1459.3H1400M1183.7,1496.7H1400M1183.7,1533.7H1400M1183.7,1570.7H1400M1183.7,1676.3H1400M1183.7,1713.7H1400M1183.7,1751H1400"/></g>
<text class="g" x="1183.7" y="1115" textLength="83.7" lengthAdjust="spacingAndGlyphs">World Population</text><text class="v" x="1380" y="1115" fill="#f4f4f4" textLength="20" lengthAdjust="spacingAndGlyphs">6.1B</text>
<text class="g" x="1183.7" y="1144.7" textLength="91.7" lengthAdjust="spacingAndGlyphs">Population Change</text><text class="v" x="1365" y="1144.7" fill="#d8464c" textLength="35" lengthAdjust="spacingAndGlyphs">-23.7%</text>
<text class="g" x="1183.7" y="1174.3" textLength="95" lengthAdjust="spacingAndGlyphs">Global GDP Change</text><text class="v" x="1370.3" y="1174.3" fill="#10a87c" textLength="29.7" lengthAdjust="spacingAndGlyphs">14.5%</text>
<text class="g" x="1183.7" y="1204" textLength="61.3" lengthAdjust="spacingAndGlyphs">Avg Inflation</text><text class="v" x="1348" y="1204" fill="#f4f4f4" textLength="52" lengthAdjust="spacingAndGlyphs">4.8%/year</text>
<text class="g" x="1183.7" y="1234" textLength="83.7" lengthAdjust="spacingAndGlyphs">Climate Refugees</text><text class="v" x="1361.3" y="1234" fill="#d8464c" textLength="38.7" lengthAdjust="spacingAndGlyphs">345.5M</text>
<text class="g" x="1183.7" y="1263.7" textLength="86" lengthAdjust="spacingAndGlyphs">Countries in Crisis</text><text class="v" x="1359.3" y="1263.7" fill="#d8464c" textLength="40.7" lengthAdjust="spacingAndGlyphs">55 / 195</text>
<text class="g" x="1183.7" y="1293.3" textLength="74" lengthAdjust="spacingAndGlyphs">Active Conflicts</text><text class="v" x="1389.7" y="1293.3" fill="#d8464c" textLength="10.3" lengthAdjust="spacingAndGlyphs">21</text>

<!-- trophy -->
<path d="M1187,1328H1197V1332C1197,1336 1194,1337 1192,1337C1190,1337 1187,1336 1187,1332Z" fill="#e0a848"/><path d="M1190,1337H1194V1339H1196V1340H1188V1339H1190Z" fill="#a8754a"/><path d="M1187,1329H1185V1331C1185,1333 1187,1334 1187,1334M1197,1329H1199V1331C1199,1333 1197,1334 1197,1334" fill="none" stroke="#e0a848"/>
<text class="h" x="1205.3" y="1337.5" textLength="75.7" lengthAdjust="spacingAndGlyphs">Top Winners</text>
<text class="u" x="1183.7" y="1364.3" textLength="187.3" lengthAdjust="spacingAndGlyphs">Countries with best outcomes (GDP growth/</text>
<text class="u" x="1183.7" y="1377" textLength="30.3" lengthAdjust="spacingAndGlyphs">wealth)</text>

<!-- flags -->
<g><rect x="1183.7" y="1399" width="15.3" height="12" rx="1.5" fill="#d8404a"/><path d="M1183.7,1405H1199M1189,1399V1411" stroke="#fff" stroke-width="3.4"/><path d="M1183.7,1405H1199M1189,1399V1411" stroke="#3a4a8a" stroke-width="1.6"/></g>
<text class="k" x="1206" y="1409.3" textLength="50.7" lengthAdjust="spacingAndGlyphs">1. Norway</text><text class="k" x="1377.7" y="1409.3" textLength="22.3" lengthAdjust="spacingAndGlyphs">+7%</text>
<rect x="1183.7" y="1436" width="15.3" height="12" rx="1.5" fill="#0b7a3e"/><rect x="1187.5" y="1440" width="7.5" height="2" fill="#d6ecd8"/><rect x="1188" y="1444" width="6.5" height="1" fill="#d6ecd8"/>
<text class="k" x="1205.7" y="1446.3" textLength="75.3" lengthAdjust="spacingAndGlyphs">2. Saudi Arabia</text><text class="k" x="1377.7" y="1446.3" textLength="22.3" lengthAdjust="spacingAndGlyphs">+7%</text>
<rect x="1183.7" y="1473" width="15.3" height="12" rx="1.5" fill="#3a45a0"/><rect x="1183.7" y="1473" width="15.3" height="4" rx="1" fill="#f2f2f4"/><rect x="1183.7" y="1481" width="15.3" height="4" rx="1" fill="#c43048"/>
<text class="k" x="1205.7" y="1483.3" textLength="43.3" lengthAdjust="spacingAndGlyphs">3. Russia</text><text class="k" x="1372.7" y="1483.3" textLength="27.3" lengthAdjust="spacingAndGlyphs">+13%</text>
<rect x="1183.7" y="1510" width="15.3" height="12" rx="1.5" fill="#d84048"/><rect x="1187.5" y="1510" width="7.7" height="12" fill="#f6f0f0"/><path d="M1191.3,1512l1.8,3 1,-.4 -.5,2.6 -2.3,1 -2.3,-1 -.5,-2.6 1,.4Z" fill="#d84048"/>
<text class="k" x="1205.3" y="1520.3" textLength="50" lengthAdjust="spacingAndGlyphs">4. Canada</text><text class="k" x="1372.7" y="1520.3" textLength="27.3" lengthAdjust="spacingAndGlyphs">+17%</text>
<rect x="1183.7" y="1547" width="15.3" height="12" rx="1.5" fill="#0f7050"/><circle cx="1190.8" cy="1553" r="3.4" fill="#d83c48"/>
<text class="k" x="1205.7" y="1557.3" textLength="70.3" lengthAdjust="spacingAndGlyphs">5. Bangladesh</text><text class="k" x="1371.3" y="1557.3" textLength="28.7" lengthAdjust="spacingAndGlyphs">+20%</text>

<rect x="1186" y="1594" width="12.5" height="12.5" rx="1.5" fill="#e4dbe8"/><path d="M1187.5,1596L1191,1600L1193,1599L1197.5,1605" fill="none" stroke="#dc4a60" stroke-width="1.3"/>
<text class="h" x="1205.3" y="1604.5" textLength="63.7" lengthAdjust="spacingAndGlyphs">Top Losers</text>
<text class="u" x="1183.7" y="1631" textLength="204.3" lengthAdjust="spacingAndGlyphs">Countries with worst outcomes (recession/crisis)</text>

<rect x="1183.7" y="1653.3" width="15.3" height="12" rx="1.5" fill="#f4f4f6"/><circle cx="1191.3" cy="1659.3" r="3" fill="#d82c44"/>
<text class="k" x="1205.7" y="1663.6" textLength="41" lengthAdjust="spacingAndGlyphs">1. Japan</text><text class="k" x="1374" y="1663.6" textLength="26" lengthAdjust="spacingAndGlyphs">-39%</text>
<rect x="1183.7" y="1690.3" width="15.3" height="12" rx="1.5" fill="#f0f0f0"/><rect x="1183.7" y="1690.3" width="5" height="12" rx="1" fill="#1a9455"/><rect x="1194" y="1690.3" width="5" height="12" rx="1" fill="#d8404a"/>
<text class="k" x="1205.7" y="1700.6" textLength="33" lengthAdjust="spacingAndGlyphs">2. Italy</text><text class="k" x="1374" y="1700.6" textLength="26" lengthAdjust="spacingAndGlyphs">-35%</text>
<rect x="1183.7" y="1727.3" width="15.3" height="12" rx="1.5" fill="#de2a1e"/><circle cx="1187.5" cy="1731" r="1.5" fill="#f2c040"/><circle cx="1191" cy="1729.5" r=".6" fill="#f2c040"/><circle cx="1191.5" cy="1732.5" r=".6" fill="#f2c040"/>
<text class="k" x="1205.7" y="1737.6" textLength="40.7" lengthAdjust="spacingAndGlyphs">3. China</text><text class="k" x="1374" y="1737.6" textLength="26" lengthAdjust="spacingAndGlyphs">-34%</text>
<rect x="1183.7" y="1764.5" width="15.3" height="4" fill="#0c0e18"/><rect x="1183.7" y="1768" width="15.3" height="4" fill="#d42a24"/><rect x="1183.7" y="1772" width="15.3" height="4" rx="1" fill="#f2c426"/>
<text class="k" x="1205.3" y="1774.6" textLength="58" lengthAdjust="spacingAndGlyphs">4. Germany</text><text class="k" x="1374" y="1774.6" textLength="26" lengthAdjust="spacingAndGlyphs">-32%</text>

<!-- legend -->
<rect x="327.3" y="1864" width="136.7" height="140" rx="8" fill="#090c2a" stroke="#171b3a"/>
<text x="341.7" y="1890" font-size="11.5" font-weight="bold" fill="#e6e6ea" textLength="65.7" lengthAdjust="spacingAndGlyphs">Impact Scale</text>
<rect x="341" y="1904.3" width="19.7" height="13" rx="3.5" fill="#10b981"/>
<text class="k" x="367" y="1915" textLength="55" lengthAdjust="spacingAndGlyphs">Low Impact</text>
<rect x="341" y="1925" width="19.7" height="13" rx="3.5" fill="#fbbf24"/>
<text class="k" x="367" y="1936" textLength="83" lengthAdjust="spacingAndGlyphs">Moderate Impact</text>
<rect x="341" y="1946" width="19.7" height="13" rx="3.5" fill="#f97316"/>
<text class="k" x="367" y="1957" textLength="68" lengthAdjust="spacingAndGlyphs">Severe Impact</text>
<rect x="341" y="1967" width="19.7" height="13" rx="3.5" fill="#dc2626"/>
<text class="k" x="367" y="1978" textLength="69" lengthAdjust="spacingAndGlyphs">Critical Impact</text>
</g>
<path d="M325,1987V953.5H1432.5V1987" fill="none" stroke="#d8d8d8" stroke-width="1"/>
</svg>
</body></html>
